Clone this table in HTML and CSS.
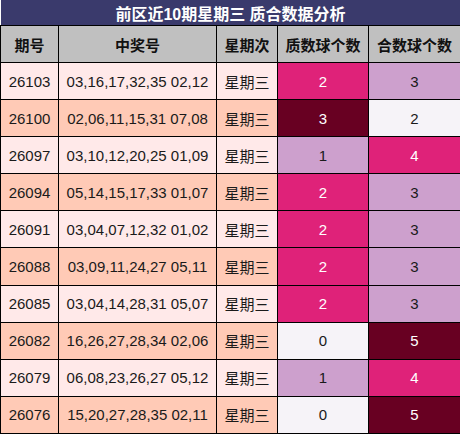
FILE: index.html
```html
<!DOCTYPE html>
<html lang="zh">
<head>
<meta charset="utf-8">
<title>前区近10期星期三 质合数据分析</title>
<link rel="stylesheet" href="styles.css">
</head>
<body>
<table class="grid">
  <colgroup>
    <col class="c-issue">
    <col class="c-nums">
    <col class="c-day">
    <col class="c-prime">
    <col class="c-comp">
  </colgroup>
  <thead>
    <tr class="title-row"><th colspan="5">前区近10期星期三 质合数据分析</th></tr>
    <tr class="head-row"><th>期号</th><th>中奖号</th><th>星期次</th><th>质数球个数</th><th>合数球个数</th></tr>
  </thead>
  <tbody>
    <tr class="light"><td>26103</td><td>03,16,17,32,35 02,12</td><td>星期三</td><td class="pink">2</td><td class="lilac">3</td></tr>
    <tr class="peach"><td>26100</td><td>02,06,11,15,31 07,08</td><td>星期三</td><td class="maroon">3</td><td class="pale">2</td></tr>
    <tr class="light"><td>26097</td><td>03,10,12,20,25 01,09</td><td>星期三</td><td class="lilac">1</td><td class="pink">4</td></tr>
    <tr class="peach"><td>26094</td><td>05,14,15,17,33 01,07</td><td>星期三</td><td class="pink">2</td><td class="lilac">3</td></tr>
    <tr class="light"><td>26091</td><td>03,04,07,12,32 01,02</td><td>星期三</td><td class="pink">2</td><td class="lilac">3</td></tr>
    <tr class="peach"><td>26088</td><td>03,09,11,24,27 05,11</td><td>星期三</td><td class="pink">2</td><td class="lilac">3</td></tr>
    <tr class="light"><td>26085</td><td>03,04,14,28,31 05,07</td><td>星期三</td><td class="pink">2</td><td class="lilac">3</td></tr>
    <tr class="peach"><td>26082</td><td>16,26,27,28,34 02,06</td><td>星期三</td><td class="pale">0</td><td class="maroon">5</td></tr>
    <tr class="light"><td>26079</td><td>06,08,23,26,27 05,12</td><td>星期三</td><td class="lilac">1</td><td class="pink">4</td></tr>
    <tr class="peach"><td>26076</td><td>15,20,27,28,35 02,11</td><td>星期三</td><td class="pale">0</td><td class="maroon">5</td></tr>
  </tbody>
</table>
</body>
</html>
```
FILE: styles.css
```css
html, body {
  margin: 0;
  padding: 0;
  background: #ffffff;
}

.grid {
  width: 460px;
  border-collapse: collapse;
  table-layout: fixed;
  font-family: "Liberation Sans", "Noto Sans CJK SC", sans-serif;
  font-size: 15px;
  color: #1a1a1a;
}

.c-issue { width: 58px; }
.c-nums { width: 158px; }
.c-day { width: 61px; }
.c-prime { width: 91px; }
.c-comp { width: 92px; }

.grid th,
.grid td {
  border: 1px solid #000;
  padding: 0;
  text-align: center;
  vertical-align: middle;
}

.title-row th {
  height: 25px;
  background: #3a3a6c;
  color: #ffffff;
  font-size: 16px;
  font-weight: bold;
  border-top: none;
  border-left: none;
  border-right: none;
}

.head-row th {
  height: 36px;
  background: #c0c0c0;
  font-weight: bold;
  color: #111;
}

.grid td {
  height: 36.1px;
}

.light td { background: #ffe9e9; }
.peach td { background: #ffcab6; }

.grid td.pink { background: #df2279; color: #ffffff; }
.grid td.maroon { background: #680022; color: #ffffff; }
.grid td.lilac { background: #cda0cd; color: #1a1a1a; }
.grid td.pale { background: #f6f3f8; color: #1a1a1a; }
```
